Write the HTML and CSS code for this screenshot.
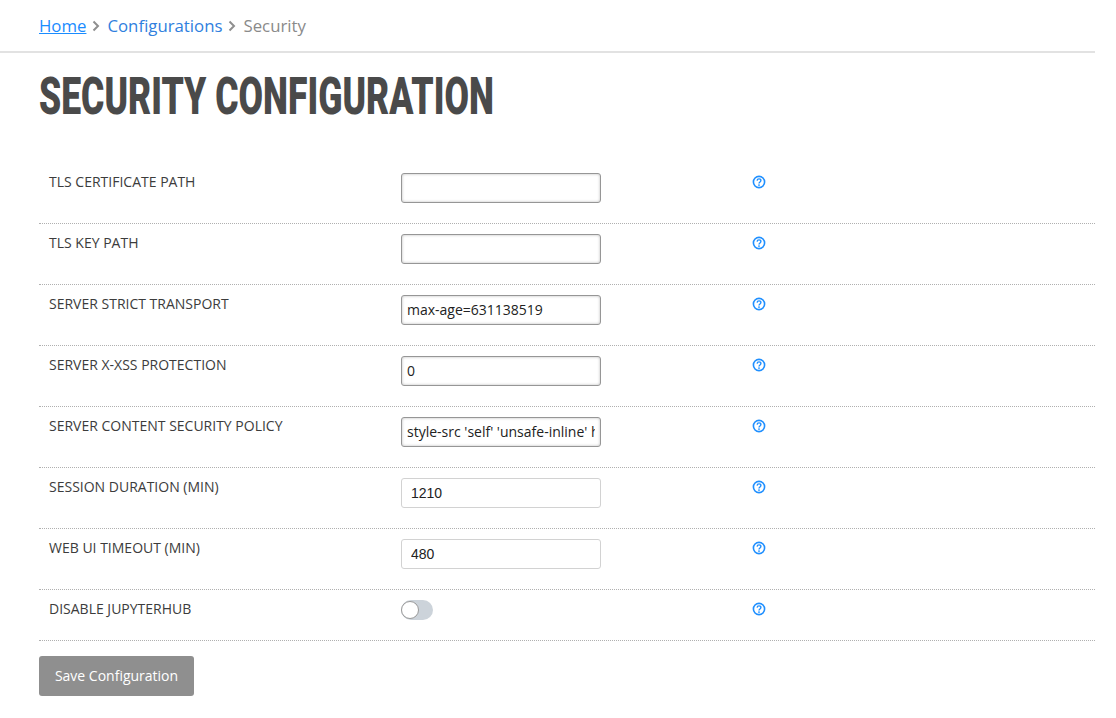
FILE: index.html
```html
<!DOCTYPE html>
<html lang="en">
<head>
<meta charset="utf-8">
<title>Security Configuration</title>
<link rel="stylesheet" href="styles.css">
</head>
<body>
<svg class="sprite" width="0" height="0" aria-hidden="true">
  <symbol id="help" viewBox="0 0 14 14">
    <circle cx="7" cy="7" r="5.6" fill="none" stroke="currentColor" stroke-width="1.6"/>
    <path d="M5.1 5.6C5.2 4.5 6 3.9 7 3.9c1.1 0 1.9.7 1.900 1.600 0 1.500-1.900 1.400-1.900 3" fill="none" stroke="currentColor" stroke-width="1.400"/>
    <circle cx="7" cy="10.100" r=".9" fill="currentColor"/>
  </symbol>
</svg>
<nav class="breadcrumb">
  <a class="crumb crumb-home" href="#">Home</a>
  <svg class="chevron" viewBox="0 0 8 12"><path d="M1.500 1.500 6 6l-4.500 4.500" fill="none" stroke="currentColor" stroke-width="2"/></svg>
  <a class="crumb" href="#">Configurations</a>
  <svg class="chevron" viewBox="0 0 8 12"><path d="M1.500 1.500 6 6l-4.500 4.500" fill="none" stroke="currentColor" stroke-width="2"/></svg>
  <span class="crumb-current">Security</span>
</nav>
<main class="content">
  <h1 class="title"><span class="title-text">SECURITY CONFIGURATION</span></h1>
  <form class="settings">
    <div class="row">
      <label class="label">TLS CERTIFICATE PATH</label>
      <div class="field"><input class="native" type="text" value=""></div>
      <div class="help"><svg class="help-icon"><use href="#help"/></svg></div>
    </div>
    <div class="row">
      <label class="label">TLS KEY PATH</label>
      <div class="field"><input class="native" type="text" value=""></div>
      <div class="help"><svg class="help-icon"><use href="#help"/></svg></div>
    </div>
    <div class="row">
      <label class="label">SERVER STRICT TRANSPORT</label>
      <div class="field"><input class="native" type="text" value="max-age=631138519"></div>
      <div class="help"><svg class="help-icon"><use href="#help"/></svg></div>
    </div>
    <div class="row">
      <label class="label">SERVER X-XSS PROTECTION</label>
      <div class="field"><input class="native" type="text" value="0"></div>
      <div class="help"><svg class="help-icon"><use href="#help"/></svg></div>
    </div>
    <div class="row">
      <label class="label">SERVER CONTENT SECURITY POLICY</label>
      <div class="field"><input class="native" type="text" value="style-src 'self' 'unsafe-inline' https://fonts.googleapis.com"></div>
      <div class="help"><svg class="help-icon"><use href="#help"/></svg></div>
    </div>
    <div class="row">
      <label class="label">SESSION DURATION (MIN)</label>
      <div class="field"><input class="plain" type="text" value="1210"></div>
      <div class="help"><svg class="help-icon"><use href="#help"/></svg></div>
    </div>
    <div class="row">
      <label class="label">WEB UI TIMEOUT (MIN)</label>
      <div class="field"><input class="plain" type="text" value="480"></div>
      <div class="help"><svg class="help-icon"><use href="#help"/></svg></div>
    </div>
    <div class="row row-short">
      <label class="label">DISABLE JUPYTERHUB</label>
      <div class="field"><span class="toggle"><span class="knob"></span></span></div>
      <div class="help"><svg class="help-icon"><use href="#help"/></svg></div>
    </div>
    <button class="save" type="button">Save Configuration</button>
  </form>
</main>
</body>
</html>
```

FILE: styles.css
```css
* { box-sizing: border-box; }
html, body { margin: 0; padding: 0; }
body {
  background: #fff;
  color: #333;
  font-family: "Open Sans", sans-serif;
  font-size: 14px;
  overflow: hidden;
  padding-right: 21px;
}
.sprite { position: absolute; }
.breadcrumb {
  display: flex;
  align-items: center;
  height: 53px;
  padding: 0 0 0 39px;
  border-bottom: 2px solid #e2e2e2;
  font-size: 16.800px;
}
.crumb { color: #2f80de; text-decoration: none; }
.crumb-home { color: #1a8cff; text-decoration: underline; }
.crumb-current { color: #8a8a8a; }
.chevron { width: 8px; height: 12px; margin: 1px 7px 0 6px; color: #8f8f8f; }
.content { padding: 0 0 0 39px; }
.title {
  margin: 0;
  height: 110px;
  padding-top: 12px;
  font-family: "Roboto", "Liberation Sans", sans-serif;
  font-size: 52px;
  line-height: 64px;
  font-weight: 900;
  color: #4a4a4a;
  white-space: nowrap;
}
.title-text {
  display: inline-block;
  transform: scaleX(0.683);
  transform-origin: left center;
}
.row {
  display: grid;
  grid-template-columns: repeat(3, 1fr);
  height: 61px;
  padding-top: 10px;
  border-bottom: 1px dotted #b0b0b0;
}
.row-short { height: 51px; }
.label {
  padding-left: 10px;
  line-height: 18px;
  color: #3c3c3c;
  font-size: 14px;
}
.field { padding-left: 10px; }
.native, .plain {
  display: block;
  width: 200px;
  height: 30px;
  background: #fff;
  color: #222;
  outline: none;
}
.native {
  padding: 0 5px 2px;
  border: 1px solid #969696;
  border-radius: 3px;
  box-shadow: inset 0 0 3px #bbb;
  font-family: "Open Sans", sans-serif;
  font-size: 14px;
}
.plain {
  padding: 0 9px 1px;
  border: 1px solid #d2d2d2;
  border-radius: 3px;
  font-family: "Liberation Sans", sans-serif;
  font-size: 14px;
}
.toggle {
  display: block;
  position: relative;
  width: 32px;
  height: 20px;
  border-radius: 10px;
  background: #ccd3da;
}
.knob {
  position: absolute;
  left: 0;
  top: 1px;
  width: 18px;
  height: 18px;
  border-radius: 50%;
  background: #fff;
  border: 1px solid #999;
}
.help { padding: 0 0 0 9px; height: 18px; display: flex; align-items: center; }
.help-icon { width: 14px; height: 14px; color: #1f8fff; }
.save {
  display: block;
  margin-top: 15px;
  width: 155px;
  height: 40px;
  padding: 0 0 2px;
  background: #8f8f8f;
  color: #fff;
  border: 0;
  border-radius: 3px;
  font-family: "Open Sans", sans-serif;
  font-size: 14px;
}
```
